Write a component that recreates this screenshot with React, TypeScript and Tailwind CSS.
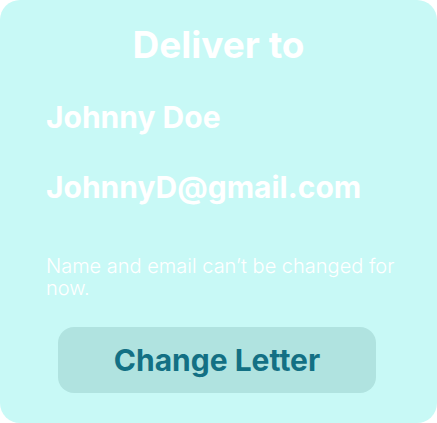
export default function App() {
  return (
    <div className="w-[437px] h-[423px] bg-white" style={{ fontFamily: 'Inter, "Liberation Sans", sans-serif' }}>
      <div className="h-full rounded-[20px] bg-[#c8f9f6] pt-[22px] pl-[46px] pr-[24px]">
        <h1 className="-ml-[46px] -mr-[24px] text-center text-[37px] leading-[46px] font-bold text-white">Deliver to</h1>
        <p className="mt-[31px] text-[30px] leading-[36px] font-bold text-white">Johnny Doe</p>
        <p className="mt-[34px] text-[30px] leading-[36px] font-bold text-white">JohnnyD@gmail.com</p>
        <p className="mt-[50px] text-xl leading-[22px] font-light text-white">
          Name and email can’t be changed for now.
        </p>
        <button className="mt-[28px] ml-[12px] flex h-[66px] w-[318px] items-center justify-center rounded-[16px] bg-[#b0e3e0] text-[30px] font-bold text-[#137084]">
          Change Letter
        </button>
      </div>
    </div>
  )
}
